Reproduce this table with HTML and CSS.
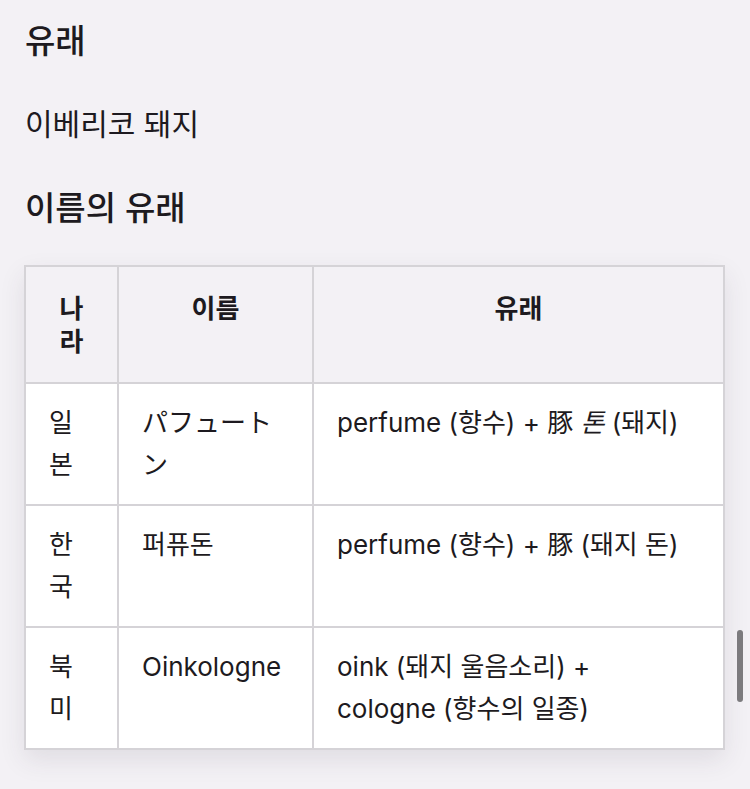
FILE: index.html
```html
<!DOCTYPE html>
<html lang="ko">
<head>
<meta charset="utf-8">
<link rel="stylesheet" href="styles.css">
</head>
<body>
<main class="page">
  <h2 class="heading first">유래</h2>
  <p class="text">이베리코 돼지</p>
  <h2 class="heading second">이름의 유래</h2>
  <table class="origin">
    <colgroup>
      <col class="c-country">
      <col class="c-name">
      <col class="c-origin">
    </colgroup>
    <thead>
      <tr>
        <th>나라</th>
        <th>이름</th>
        <th>유래</th>
      </tr>
    </thead>
    <tbody>
      <tr>
        <td>일본</td>
        <td>パフュートン</td>
        <td>perfume (향수) + 豚 <i>톤</i> (돼지)</td>
      </tr>
      <tr>
        <td>한국</td>
        <td>퍼퓨돈</td>
        <td>perfume (향수) + 豚 (돼지 돈)</td>
      </tr>
      <tr>
        <td>북미</td>
        <td>Oinkologne</td>
        <td>oink (돼지 울음소리) +<br>cologne (향수의 일종)</td>
      </tr>
    </tbody>
  </table>
</main>
<div class="scroll-thumb"></div>
</body>
</html>
```
FILE: styles.css
```css
html, body {
  margin: 0;
  padding: 0;
  background: #f3f1f5;
}
body {
  font-family: Inter, "Noto Sans CJK KR", sans-serif;
  color: #1d1a20;
  height: 789px;
  overflow: hidden;
}
.page {
  padding: 0 25px 0 24px;
}
.heading {
  font-size: 33px;
  font-weight: 500;
  line-height: 42px;
  margin: 0;
  padding-left: 1px;
}
.heading.first {
  padding-top: 20px;
}
.text {
  font-size: 30px;
  line-height: 40px;
  margin: 42px 0 0;
  padding-left: 1px;
}
.heading.second {
  margin-top: 43px;
}
.origin {
  margin-top: 36px;
  width: 701px;
  border-collapse: collapse;
  table-layout: fixed;
  box-shadow: 0 10px 24px rgba(60, 50, 70, 0.10);
  font-size: 26px;
}
.c-country { width: 93px; }
.c-name { width: 195px; }
.origin th,
.origin td {
  border: 2px solid #d5d3d7;
  vertical-align: top;
  text-align: left;
}
.origin th {
  background: #f3f1f5;
  font-weight: 700;
  line-height: 33px;
  padding: 25px 22px 24px;
  text-align: center;
}
.origin td {
  background: #ffffff;
  line-height: 42px;
  padding: 18px 22px 18px 23px;
}
.origin i {
  font-style: italic;
}
.scroll-thumb {
  position: absolute;
  left: 737px;
  top: 630px;
  width: 6px;
  height: 72px;
  border-radius: 3px;
  background: #7c7b7e;
}
```
